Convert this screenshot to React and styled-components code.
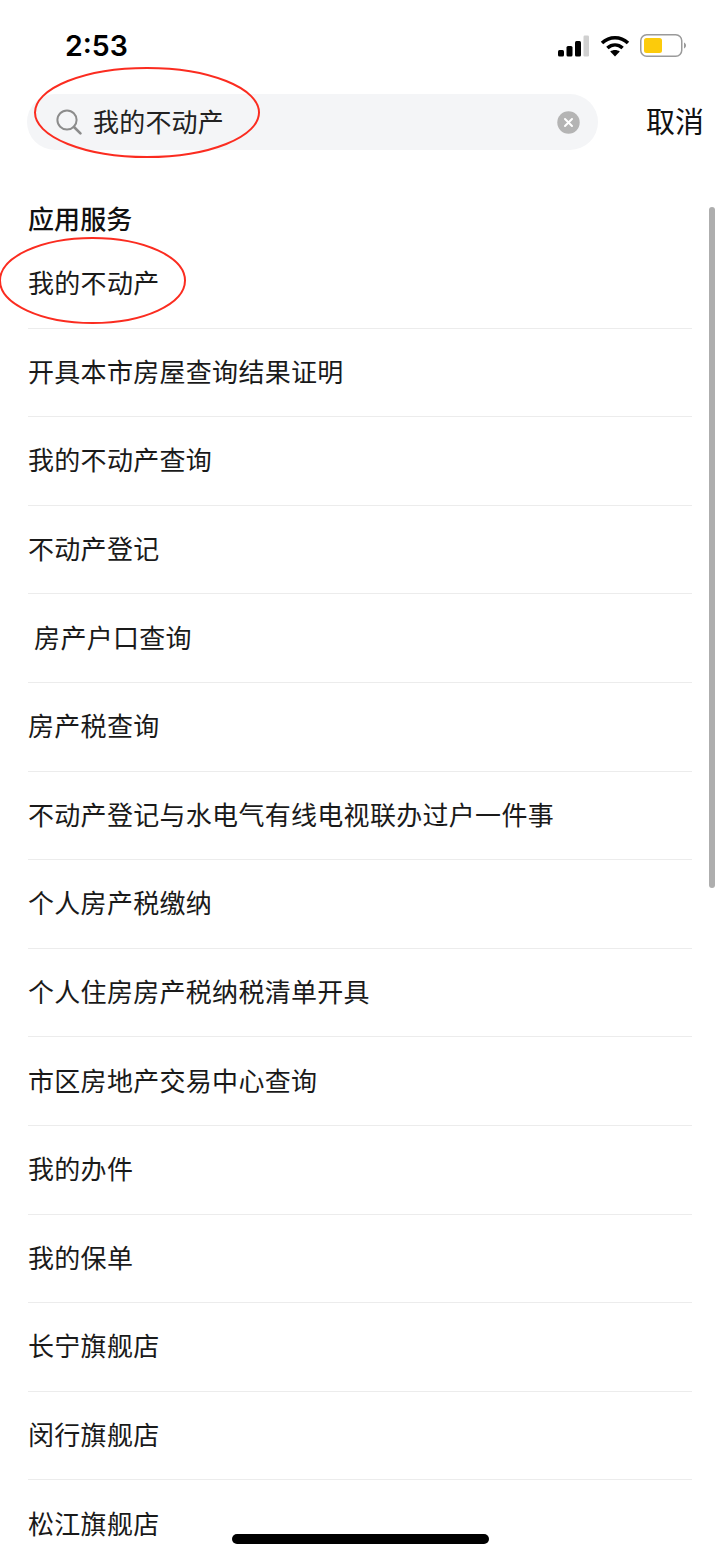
import React from "react";
import styled, { createGlobalStyle } from "styled-components";

const GlobalStyle = createGlobalStyle`
    html, body {
        margin: 0;
        padding: 0;
        background: #fff;
    }
    * {
        box-sizing: border-box;
    }
`;

const FONT = `"Noto Sans CJK SC", "Noto Sans", sans-serif`;

const services = [
    "我的不动产",
    "开具本市房屋查询结果证明",
    "我的不动产查询",
    "不动产登记",
    " 房产户口查询",
    "房产税查询",
    "不动产登记与水电气有线电视联办过户一件事",
    "个人房产税缴纳",
    "个人住房房产税纳税清单开具",
    "市区房地产交易中心查询",
    "我的办件",
    "我的保单",
    "长宁旗舰店",
    "闵行旗舰店",
    "松江旗舰店",
];

const Page = styled.div`
    position: relative;
    width: 720px;
    height: 1558px;
    overflow: hidden;
    background: #fff;
    font-family: ${FONT};
    color: #111;
`;

const StatusBar = styled.div`
    height: 94px;
    padding: 27px 34px 0 65px;
    display: flex;
    justify-content: space-between;
    align-items: flex-start;
`;

const Time = styled.div`
    font-family: "Inter", "Liberation Sans", sans-serif;
    font-size: 28.5px;
    line-height: 38px;
    font-weight: 600;
    color: #000;
`;

const StatusIcons = styled.div`
    display: flex;
    align-items: center;
    gap: 10.5px;
    margin-top: 7px;
`;

const SearchRow = styled.div`
    display: flex;
    align-items: center;
    padding: 0 16px 0 27px;
    justify-content: space-between;
`;

const SearchBox = styled.div`
    width: 571px;
    height: 56px;
    border-radius: 28px;
    background: #f4f5f7;
    display: flex;
    align-items: center;
    padding: 0 18px 0 29px;
`;

const SearchText = styled.div`
    flex: 1;
    margin: 0 0 2px 11px;
    font-size: 26px;
    line-height: 36px;
    letter-spacing: 0.2px;
    color: #222;
`;

const Cancel = styled.div`
    font-size: 29px;
    line-height: 40px;
    padding-bottom: 4px;
    color: #111;
`;

const Section = styled.div`
    padding: 49px 28px 0;
`;

const SectionTitle = styled.div`
    font-size: 26px;
    line-height: 38px;
    font-weight: 500;
    letter-spacing: 0.1px;
    margin-bottom: 3px;
    color: #111;
`;

const Row = styled.div`
    height: 88.6px;
    padding-bottom: 4px;
    display: flex;
    align-items: center;
    font-size: 26px;
    letter-spacing: 0.3px;
    color: #1a1a1a;
    white-space: pre;
    border-bottom: 1px solid #ececec;
`;

const Scrollbar = styled.div`
    position: absolute;
    left: 709px;
    top: 207px;
    width: 6px;
    height: 681px;
    border-radius: 3px;
    background: #aeaeae;
`;

const HomeBar = styled.div`
    position: absolute;
    left: 232px;
    top: 1534px;
    width: 257px;
    height: 10px;
    border-radius: 5px;
    background: #000;
`;

const Circled = styled.svg`
    position: absolute;
    left: ${(p) => p.$left}px;
    top: ${(p) => p.$top}px;
    overflow: visible;
    pointer-events: none;
`;

const RedEllipse = ({ left, top, width, height }) => (
    <Circled $left={left} $top={top} width={width} height={height} viewBox={`0 0 ${width} ${height}`}>
        <ellipse
            cx={width / 2}
            cy={height / 2}
            rx={width / 2 - 1}
            ry={height / 2 - 1}
            fill="none"
            stroke="#fb2c20"
            strokeWidth="2"
        />
    </Circled>
);

const SignalIcon = () => (
    <svg width="31" height="22" viewBox="0 0 31 22">
        <rect x="0" y="15" width="6" height="6.5" rx="1.5" fill="#000" />
        <rect x="8.5" y="11" width="6" height="10.5" rx="1.5" fill="#000" />
        <rect x="17" y="6" width="6" height="15.5" rx="1.5" fill="#000" />
        <rect x="25.5" y="0.5" width="5.5" height="21" rx="1.2" fill="#d0d0d0" />
    </svg>
);

const WifiIcon = () => (
    <svg width="30" height="22" viewBox="0 0 30 22" fill="none">
        <path d="M2 8 C9.5 1 20.5 1 28 8" stroke="#000" strokeWidth="3.6" />
        <path d="M7.4 13 C12 9 18 9 22.6 13" stroke="#000" strokeWidth="3.6" />
        <path d="M15 21.5 L10.2 16.6 C13 14.6 17 14.6 19.8 16.6 Z" fill="#000" />
    </svg>
);

const BatteryIcon = () => (
    <svg width="46" height="23" viewBox="0 0 46 23">
        <rect x="0.75" y="0.75" width="41" height="21.5" rx="6" fill="#fff" stroke="#9a9a9a" strokeWidth="1.5" />
        <rect x="4" y="4" width="18" height="15" rx="2.5" fill="#fccb0b" />
        <path d="M44 8.5 C45.2 9 46 10.2 46 11.5 C46 12.8 45.2 14 44 14.5 Z" fill="#9a9a9a" />
    </svg>
);

const SearchIcon = () => (
    <svg width="26" height="26" viewBox="0 0 26 26" fill="none">
        <circle cx="11" cy="11" r="9.6" stroke="#8c8c8c" strokeWidth="2" />
        <path d="M18 18 L24.4 24.4" stroke="#8c8c8c" strokeWidth="2.6" strokeLinecap="round" />
    </svg>
);

const ClearIcon = () => (
    <svg width="23" height="23" viewBox="0 0 23 23">
        <circle cx="11.5" cy="11.5" r="11.2" fill="#b4b4b4" />
        <path d="M8 8 L15 15 M15 8 L8 15" stroke="#fff" strokeWidth="2" strokeLinecap="round" />
    </svg>
);

const App = () => {
    return (
        <Page>
            <GlobalStyle />
            <StatusBar>
                <Time>2:53</Time>
                <StatusIcons>
                    <SignalIcon />
                    <WifiIcon />
                    <BatteryIcon />
                </StatusIcons>
            </StatusBar>
            <SearchRow>
                <SearchBox>
                    <SearchIcon />
                    <SearchText>我的不动产</SearchText>
                    <ClearIcon />
                </SearchBox>
                <Cancel>取消</Cancel>
            </SearchRow>
            <Section>
                <SectionTitle>应用服务</SectionTitle>
                {services.map((name) => (
                    <Row key={name}>{name}</Row>
                ))}
            </Section>
            <Scrollbar />
            <HomeBar />
            <RedEllipse left={34} top={67} width={226} height={91} />
            <RedEllipse left={-1} top={237} width={187} height={87} />
        </Page>
    );
};

export default App;
